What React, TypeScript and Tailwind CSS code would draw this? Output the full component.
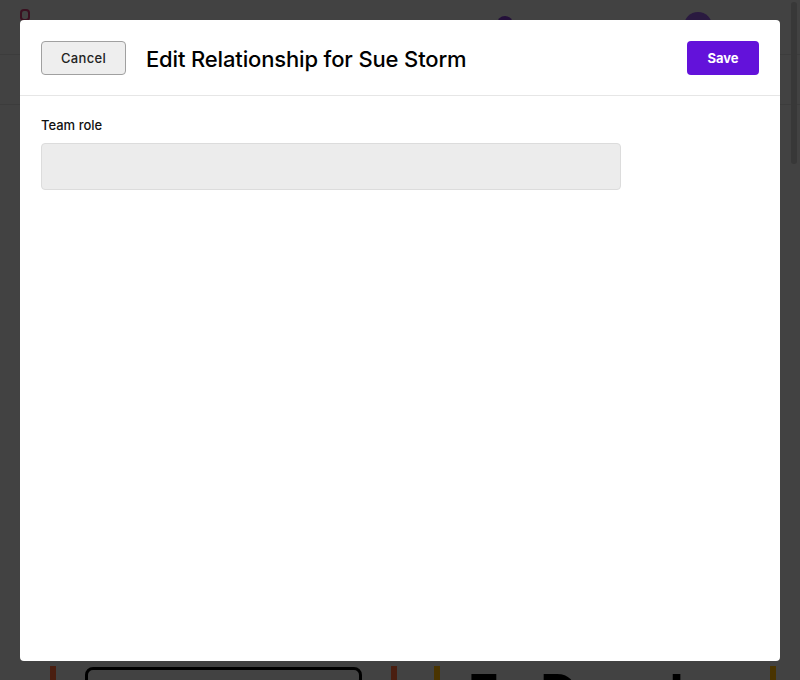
import React from "react";

export default function App() {
  return (
    <div
      className="relative w-full h-[680px] overflow-hidden bg-[#424242]"
      style={{ fontFamily: "Inter, 'Noto Sans', sans-serif" }}
    >
      {/* dimmed page behind */}
      <div className="flex flex-col w-full h-full">
        <div className="h-[55px] border-b border-[#3c3c3c] flex items-center px-5 relative">
          <div className="w-[10px] h-[12px] border-2 border-[#3a1020] rounded-sm -mt-6" />
          <div className="absolute left-[497px] top-[16px] w-[16px] h-[16px] rounded-full bg-[#24103a]" />
          <div className="absolute left-[684px] top-[12px] w-[28px] h-[28px] rounded-full bg-[#2a1a40]" />
        </div>
        <div className="h-[50px] border-b border-[#3c3c3c]" />
        <div className="flex-1 flex gap-[37px] pl-[50px] items-end">
          <div className="w-[347px] shrink-0 h-[14px] border-x-[6px] border-[#4a1e10] pl-[29px] pt-[1px]">
            <div className="w-[277px] h-[20px] border-[3px] border-black rounded-[8px]" />
          </div>
          <div className="w-[342px] shrink-0 h-[14px] border-x-[6px] border-[#4a3400] pl-[28px] pt-[2px] overflow-hidden">
            <div className="text-[52px] font-bold leading-none text-black whitespace-nowrap">Fa Dansk</div>
          </div>
        </div>
      </div>
      {/* scrollbar */}
      <div className="absolute right-[3px] top-[2px] w-[6px] h-[162px] rounded-full bg-[#383838]" />

      {/* modal */}
      <div className="absolute inset-0 pt-5 px-5">
        <div className="w-[760px] h-[641px] bg-white rounded-[4px] flex flex-col">
          <div className="h-[76px] border-b border-[#e6e6e6] flex items-center justify-between px-[21px] pt-[1px]">
            <div className="flex items-center gap-[20px]">
              <button className="w-[85px] h-[34px] rounded-[4px] bg-[#eeeeee] border border-[#a0a0a0] text-[13px] font-medium tracking-[0.3px] text-[#222] pt-[2px]">
                Cancel
              </button>
              <h1 className="text-[22px] font-medium text-black tracking-[-0.15px] pt-[3px]">
                Edit Relationship for Sue Storm
              </h1>
            </div>
            <button className="w-[72px] h-[34px] rounded-[4px] bg-[#6312da] text-white text-[13px] font-bold pt-[2px]">
              Save
            </button>
          </div>
          <div className="px-[21px] pt-[21px] flex flex-col gap-[10px]">
            <label className="text-[13px] font-medium text-[#111] leading-[16px]">Team role</label>
            <div className="w-[580px] h-[47px] rounded-[4px] bg-[#ececec] border border-[#dcdcdc]" />
          </div>
        </div>
      </div>
    </div>
  );
}
